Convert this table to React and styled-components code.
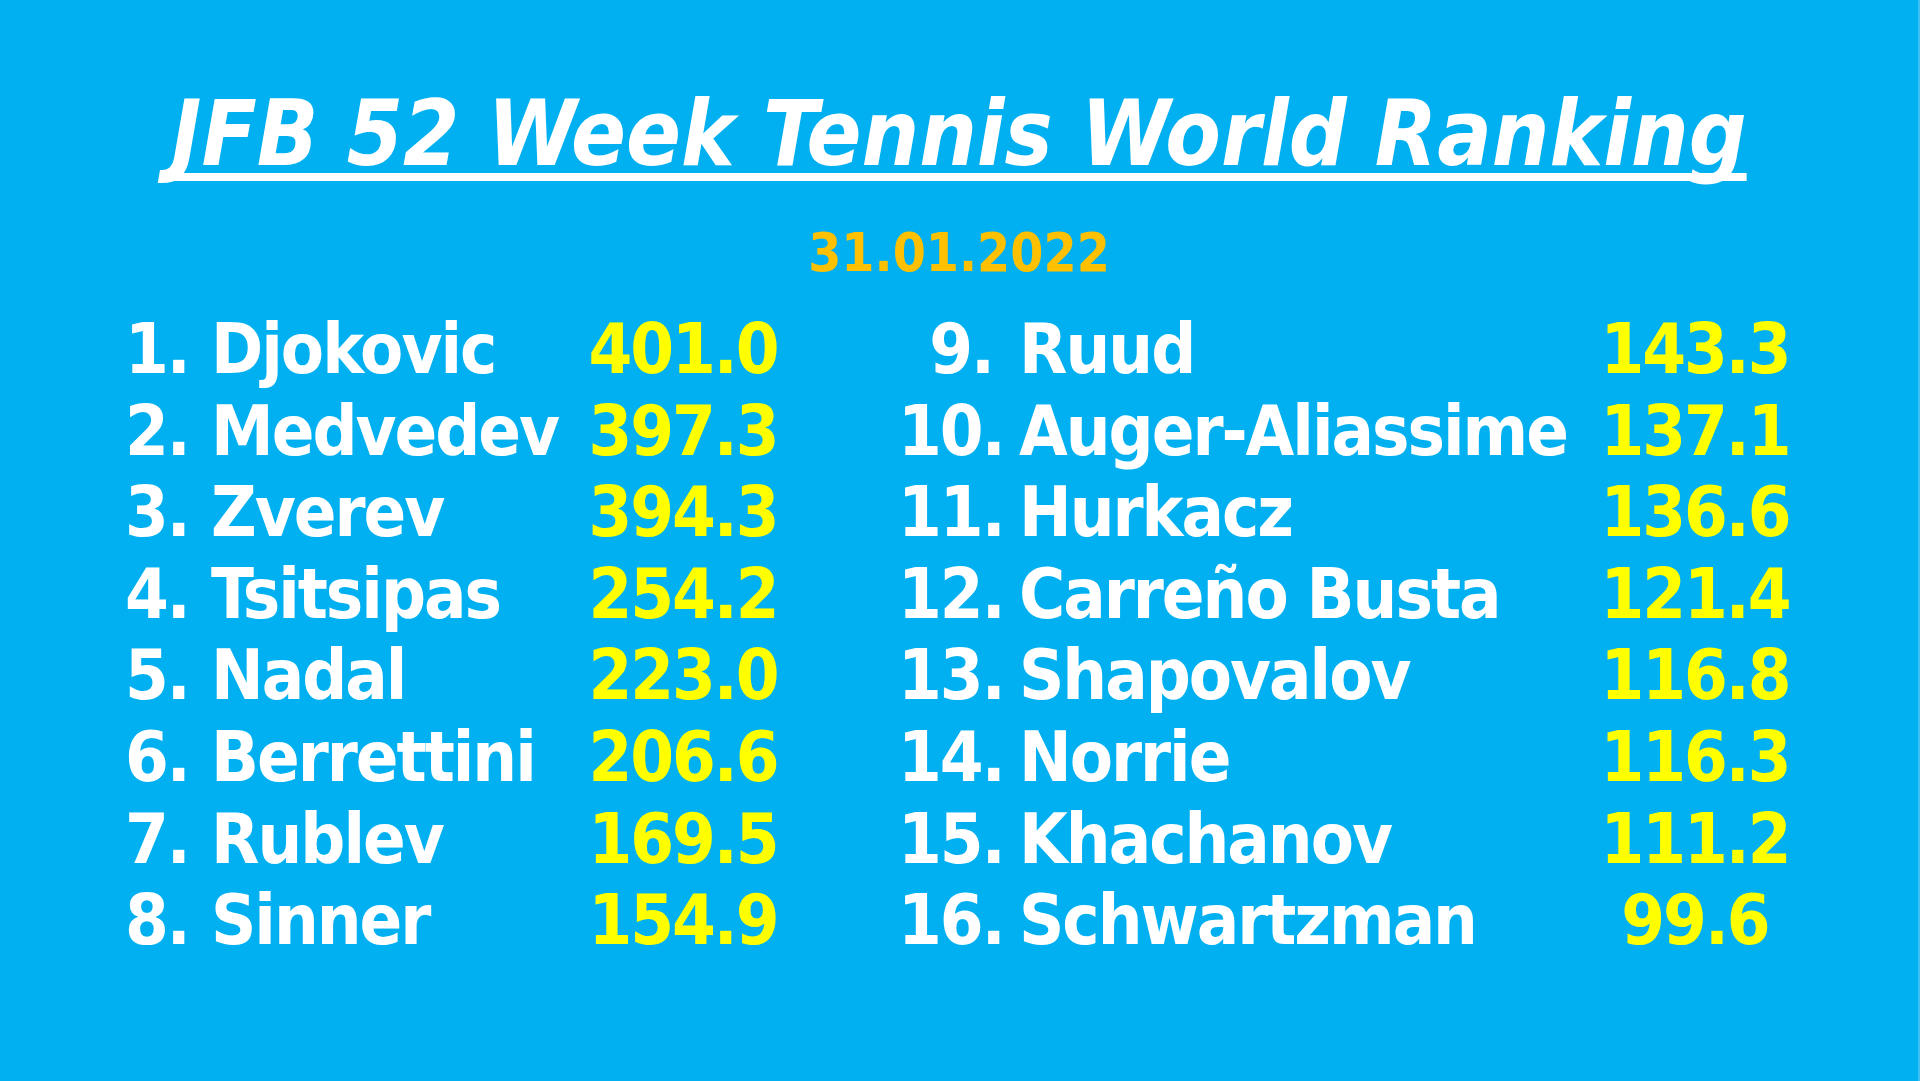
import React from "react"
import styled, { createGlobalStyle } from 'styled-components'

const left = [
  { rank: 1, name: 'Djokovic', points: '401.0' },
  { rank: 2, name: 'Medvedev', points: '397.3' },
  { rank: 3, name: 'Zverev', points: '394.3' },
  { rank: 4, name: 'Tsitsipas', points: '254.2' },
  { rank: 5, name: 'Nadal', points: '223.0' },
  { rank: 6, name: 'Berrettini', points: '206.6' },
  { rank: 7, name: 'Rublev', points: '169.5' },
  { rank: 8, name: 'Sinner', points: '154.9' },
]

const right = [
  { rank: 9, name: 'Ruud', points: '143.3' },
  { rank: 10, name: 'Auger-Aliassime', points: '137.1' },
  { rank: 11, name: 'Hurkacz', points: '136.6' },
  { rank: 12, name: 'Carreño Busta', points: '121.4' },
  { rank: 13, name: 'Shapovalov', points: '116.8' },
  { rank: 14, name: 'Norrie', points: '116.3' },
  { rank: 15, name: 'Khachanov', points: '111.2' },
  { rank: 16, name: 'Schwartzman', points: '99.6' },
]

// one half of the table: rank | name | points
const RankList = ({ players, rankWidth, nameWidth, align }) => (
  <Column $rankWidth={rankWidth} $nameWidth={nameWidth}>
    {players.map(p => (
      <React.Fragment key={p.rank}>
        <Rank $align={align}>{p.rank}.</Rank>
        <Name>{p.name}</Name>
        <Points>{p.points}</Points>
      </React.Fragment>
    ))}
  </Column>
)

const Ranking = () => {
  return (
    <>
      <GlobalStyle />
      <Page>
        <Title>JFB 52 Week Tennis World Ranking</Title>
        <Date>31.01.2022</Date>
        <Columns>
          <RankList players={left} rankWidth={86} nameWidth={372} align="left" />
          <RankList players={right} rankWidth={121} nameWidth={576} align="right" />
        </Columns>
      </Page>
    </>
  )
}

// styles

const GlobalStyle = createGlobalStyle`
  html, body {
    margin: 0;
    padding: 0;
    background: #00b0f0;
  }
`

const Page = styled.div`
  width: 1920px;
  height: 1081px;
  box-sizing: border-box;
  background: #00b0f0;
  border-right: 2px solid #3ec2f4;
  padding-top: 84px;
  font-family: "DejaVu Sans Condensed", "DejaVu Sans", sans-serif;
  font-stretch: condensed;
  font-weight: bold;
  color: #fff;
  overflow: hidden;
`

const Title = styled.h1`
  margin: 0;
  text-align: center;
  font-size: 90px;
  line-height: 100px;
  font-style: italic;
  font-weight: bold;
  text-decoration: underline;
  text-decoration-thickness: 8px;
  text-underline-offset: 8px;
  text-decoration-skip-ink: none;
`

const Date = styled.div`
  margin-top: 39px;
  text-align: center;
  font-size: 53px;
  line-height: 60px;
  color: #ffc000;
`

const Columns = styled.div`
  display: flex;
  gap: 115px;
  margin-top: 26px;
  padding-left: 125px;
`

const Column = styled.div`
  display: grid;
  grid-template-columns: ${p => p.$rankWidth}px ${p => p.$nameWidth}px 200px;
  grid-auto-rows: 81.6px;
  font-size: 70px;
  line-height: 81.6px;
  letter-spacing: -2px;
  white-space: nowrap;
`

const Rank = styled.div`
  padding-right: 26px;
  text-align: ${p => p.$align};
`

const Name = styled.div``

const Points = styled.div`
  text-align: center;
  color: #ffff00;
`

export default Ranking
